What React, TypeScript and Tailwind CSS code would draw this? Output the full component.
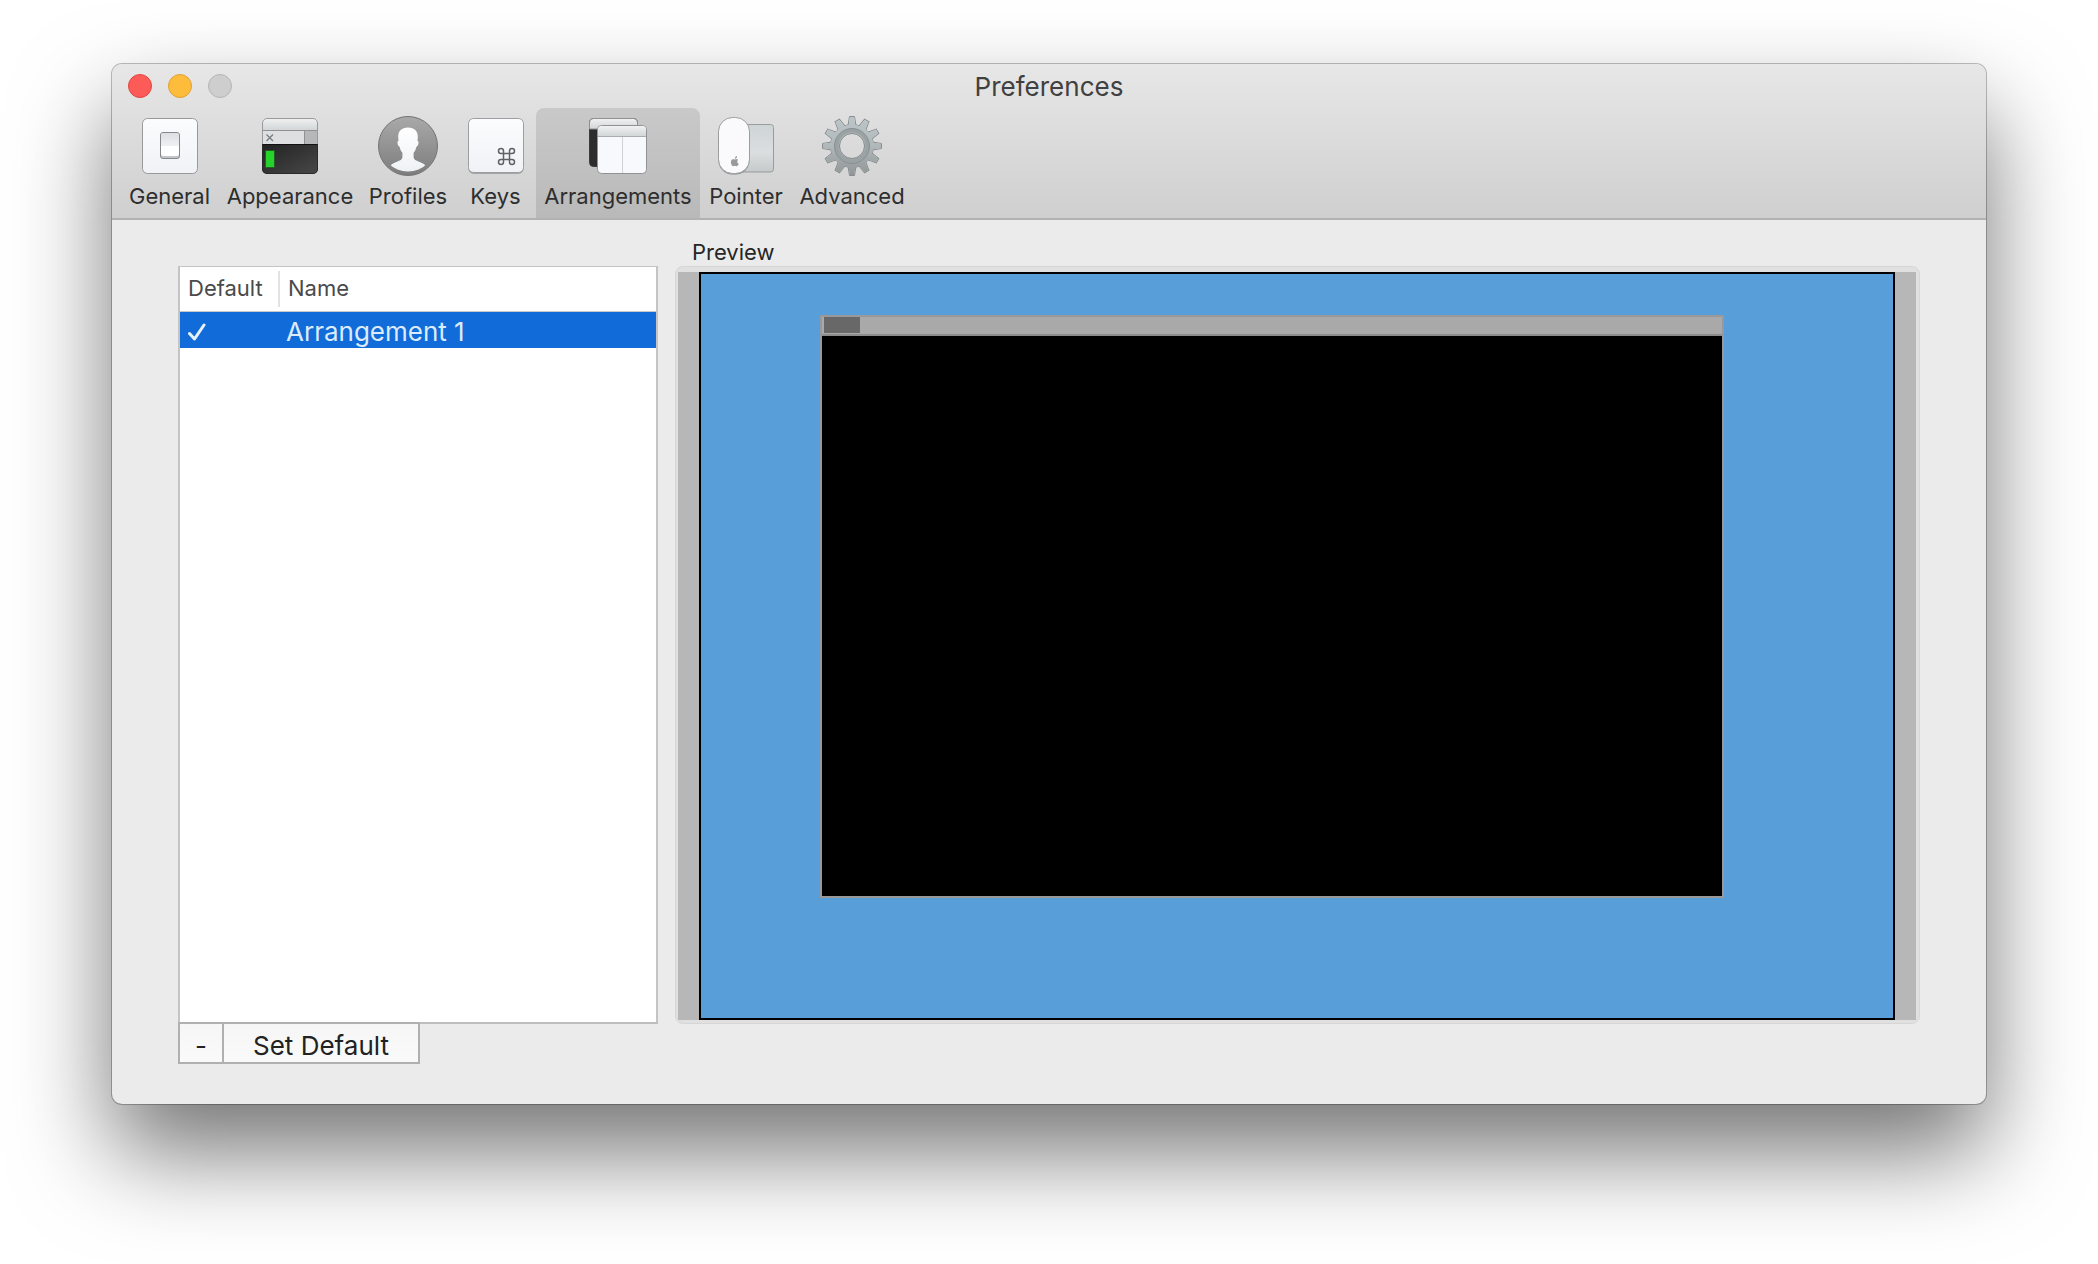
import { useState } from 'react';
import type { ReactNode } from 'react';

type Tab = {
  id: string;
  width: string;
  icon: ReactNode;
};

const TEETH = Array.from({ length: 12 }, (_, i) => i * 30);

function GeneralIcon() {
  return (
    <svg viewBox="0 0 60 60" className="size-[60px]" aria-hidden="true">
      <defs>
        <linearGradient id="plate" x1="0" y1="0" x2="0" y2="1">
          <stop offset="0" stopColor="#fbfcfd" />
          <stop offset="1" stopColor="#f0f2f6" />
        </linearGradient>
        <linearGradient id="toggle" x1="0" y1="0" x2="0" y2="1">
          <stop offset="0" stopColor="#dcdfe1" />
          <stop offset="1" stopColor="#eef0f1" />
        </linearGradient>
      </defs>
      <rect x="2.5" y="2.5" width="55" height="55" rx="5" fill="url(#plate)" stroke="#97999b" />
      <rect x="20.5" y="16.5" width="19" height="26" rx="2.5" fill="#c3c5c8" stroke="#85878a" />
      <path d="M21 30h18v8a2 2 0 0 1-2 2H23a2 2 0 0 1-2-2z" fill="#fff" />
      <path d="M21 30V19a2 2 0 0 1 2-2h14a2 2 0 0 1 2 2v11z" fill="url(#toggle)" />
    </svg>
  );
}

function AppearanceIcon() {
  return (
    <svg viewBox="0 0 60 60" className="size-[60px]" aria-hidden="true">
      <defs>
        <linearGradient id="bar" x1="0" y1="0" x2="0" y2="1">
          <stop offset="0" stopColor="#f1f2f2" />
          <stop offset="1" stopColor="#d2d6d7" />
        </linearGradient>
        <linearGradient id="screen" x1="0" y1="0" x2="1" y2="1">
          <stop offset="0" stopColor="#222" />
          <stop offset="1" stopColor="#484848" />
        </linearGradient>
        <clipPath id="appearanceClip">
          <rect x="2" y="2" width="56" height="56" rx="5" />
        </clipPath>
      </defs>
      <g clipPath="url(#appearanceClip)">
        <rect x="2" y="2" width="56" height="12" fill="url(#bar)" />
        <rect x="2" y="14" width="56" height="14" fill="#dddfe1" />
        <rect x="44" y="14" width="14" height="14" fill="#b5b7b9" />
        <path d="M2 14.500h56M44.500 14v14" stroke="#8f9193" />
        <rect x="2" y="28" width="56" height="30" fill="url(#screen)" />
        <path d="M2 28.500h56" stroke="#111" />
      </g>
      <path d="M6.500 18.500l6.500 6.500M13 18.500L6.500 25" stroke="#77797b" strokeWidth="1.200" />
      <rect x="5" y="34" width="10" height="18" fill="#1f7a22" opacity="0.6" />
      <rect x="6" y="35" width="8" height="16" fill="#26d32b" />
      <path d="M2.500 28V7a4.500 4.500 0 0 1 4.500-4.500h46A4.500 4.500 0 0 1 57.500 7v21" fill="none" stroke="#97999b" />
      <path d="M2.500 28v25a4.500 4.500 0 0 0 4.500 4.500h46a4.500 4.500 0 0 0 4.500-4.500V28" fill="none" stroke="#2a2a2a" />
    </svg>
  );
}

function ProfilesIcon() {
  return (
    <svg viewBox="0 0 60 60" className="size-[60px]" aria-hidden="true">
      <defs>
        <linearGradient id="disc" x1="0" y1="0" x2="0" y2="1">
          <stop offset="0" stopColor="#a9a9a9" />
          <stop offset="1" stopColor="#7d7d7d" />
        </linearGradient>
        <linearGradient id="person" x1="0" y1="0" x2="0" y2="1">
          <stop offset="0" stopColor="#fff" />
          <stop offset="1" stopColor="#eef1f4" />
        </linearGradient>
        <clipPath id="discClip">
          <circle cx="30" cy="28" r="27.500" />
        </clipPath>
      </defs>
      <circle cx="30" cy="30" r="29.500" fill="url(#disc)" stroke="#747474" />
      <path
        clipPath="url(#discClip)"
        fill="url(#person)"
        d="M30 11.500c6.500 0 10 4 9.800 9.500l-.3 4c1 0 1.200 1.200.9 2.500-.3 1.700-.9 3-2 3.200-.5 2.500-1.500 4.500-2.800 6v4.800c.2 2 2.400 3 5.400 4.200 3.500 1.400 6 2.400 6.500 4.300V58h-35v-8c.5-1.900 3-2.900 6.500-4.300 3-1.200 5.200-2.200 5.400-4.200v-4.800c-1.300-1.500-2.300-3.500-2.800-6-1.100-.2-1.700-1.500-2-3.200-.3-1.300-.1-2.500.9-2.500l-.3-4c-.2-5.500 3.300-9.500 9.800-9.500z"
      />
    </svg>
  );
}

function KeysIcon() {
  return (
    <svg viewBox="0 0 60 60" className="size-[60px]" aria-hidden="true">
      <rect x="2.5" y="3.5" width="55" height="54.500" rx="5" fill="#a3a5a9" />
      <rect x="2.5" y="2.5" width="55" height="54" rx="5" fill="url(#plate)" stroke="#9c9ea1" />
      <path
        d="M37.500 37.500h6v6h-6zM37.500 37.500h-2.500a2.500 2.500 0 1 1 2.500-2.500zM43.500 37.500h2.500a2.500 2.500 0 1 0-2.500-2.500zM37.500 43.500h-2.500a2.500 2.500 0 1 0 2.500 2.500zM43.500 43.500h2.500a2.500 2.500 0 1 1-2.500 2.500z"
        fill="none"
        stroke="#606266"
        strokeWidth="1.500"
      />
    </svg>
  );
}

function ArrangementsIcon() {
  return (
    <svg viewBox="0 0 60 60" className="size-[60px]" aria-hidden="true">
      <rect x="1.5" y="2.5" width="48" height="48" rx="4" fill="#2d2d2d" stroke="#3c3c3c" />
      <path d="M1.500 13V6.500a4 4 0 0 1 4-4h40a4 4 0 0 1 4 4V13z" fill="url(#bar)" stroke="#8f9193" />
      <rect x="9.5" y="9.500" width="49" height="48" rx="4" fill="#f8f9fc" stroke="#8f9193" />
      <path d="M10 20v-6.500a3.500 3.500 0 0 1 3.500-3.500h41a3.500 3.500 0 0 1 3.500 3.500V20z" fill="url(#bar)" />
      <path d="M10 20.500h48" stroke="#a9abac" />
      <path d="M34.500 21v36" stroke="#cfd1d5" />
    </svg>
  );
}

function PointerIcon() {
  return (
    <svg viewBox="0 0 60 60" className="size-[60px]" aria-hidden="true">
      <defs>
        <linearGradient id="pad" x1="0" y1="0" x2="0" y2="1">
          <stop offset="0" stopColor="#cfd4d6" />
          <stop offset="0.6" stopColor="#dadedf" />
          <stop offset="1" stopColor="#c5c9ca" />
        </linearGradient>
      </defs>
      <rect x="14.500" y="8.500" width="43" height="47.500" rx="3" fill="url(#pad)" stroke="#999b9c" />
      <rect x="2.500" y="2.500" width="31" height="56" rx="14" fill="#858789" />
      <rect x="2.500" y="1.500" width="31" height="56" rx="14" fill="#fafafc" stroke="#9b9d9f" />
      <path
        fill="#97999b"
        d="M19 43.600c1-.6 2-.8 3.100.2-1.300 1.300-1.100 3.100.6 4-.5 1.500-1.400 2.500-2.300 2.400-.6-.1-.9-.4-1.500-.4s-.9.300-1.500.4c-1.400.1-3-3.200-2.400-5 .5-1.700 2-2.300 4-1.600zM18.900 42.800c0-1.600.9-2.600 2.200-2.800.1 1.600-.8 2.700-2.200 2.800z"
      />
    </svg>
  );
}

function AdvancedIcon() {
  return (
    <svg viewBox="0 0 60 60" className="size-[60px]" aria-hidden="true">
      <defs>
        <linearGradient id="metal" gradientUnits="userSpaceOnUse" x1="0" y1="0" x2="0" y2="60">
          <stop offset="0" stopColor="#bcc6c9" />
          <stop offset="0.5" stopColor="#b0b8ba" />
          <stop offset="1" stopColor="#909495" />
        </linearGradient>
        <mask id="gearMask">
          <g fill="#fff">
            <circle cx="30" cy="30" r="21.500" />
            {TEETH.map((a) => (
              <path key={a} d="M26.500 10L27.800 1h4.400L33.500 10z" transform={`rotate(${a} 30 30)`} />
            ))}
          </g>
          <circle cx="30" cy="30" r="12.500" fill="#000" />
        </mask>
      </defs>
      <g fill="none" stroke="#878d8f">
        {TEETH.map((a) => (
          <path key={a} d="M26 9.500L27.500 .5h5L34 9.500" transform={`rotate(${a} 30 30)`} />
        ))}
        <circle cx="30" cy="30" r="21.500" />
      </g>
      <rect width="60" height="60" fill="url(#metal)" mask="url(#gearMask)" />
      <circle cx="30" cy="30" r="15.500" fill="none" stroke="#9aa2a4" strokeWidth="4" />
      <circle cx="30" cy="30" r="17.500" fill="none" stroke="#899092" />
      <circle cx="30" cy="30" r="12.500" fill="none" stroke="#858b8d" />
    </svg>
  );
}

const TABS: Tab[] = [
  { id: 'General', width: 'w-[99px]', icon: <GeneralIcon /> },
  { id: 'Appearance', width: 'w-[142px]', icon: <AppearanceIcon /> },
  { id: 'Profiles', width: 'w-[94px]', icon: <ProfilesIcon /> },
  { id: 'Keys', width: 'w-[81px]', icon: <KeysIcon /> },
  { id: 'Arrangements', width: 'w-[164px]', icon: <ArrangementsIcon /> },
  { id: 'Pointer', width: 'w-[92px]', icon: <PointerIcon /> },
  { id: 'Advanced', width: 'w-[120px]', icon: <AdvancedIcon /> },
];

function Toolbar() {
  const [active, setActive] = useState('Arrangements');

  return (
    <nav className="flex px-2" aria-label="Preference panes">
      {TABS.map((tab) => (
        <button
          key={tab.id}
          type="button"
          onClick={() => setActive(tab.id)}
          aria-pressed={active === tab.id}
          className={`flex h-[110px] flex-col items-center gap-1.5 rounded-t-lg pt-2 text-[22px] leading-7 whitespace-nowrap text-[#2e2e2e] ${tab.width} ${
            active === tab.id ? 'bg-linear-to-b from-[#c9c9c9] to-[#b9b9b9]' : ''
          }`}
        >
          {tab.icon}
          <span>{tab.id}</span>
        </button>
      ))}
    </nav>
  );
}

function ArrangementList() {
  return (
    <div className="flex flex-col pt-[46px] pb-10">
      <div className="flex-1 border-x-2 border-t border-[#c4c4c4] bg-white">
        <table className="w-full table-fixed text-left">
          <thead>
            <tr className="h-11 border-b border-[#c8c8c8] text-[22px] text-[#4a4a4a]">
              <th className="w-[100px] p-0 font-normal">
                <div className="flex h-9 items-center border-r-2 border-[#e2e2e2] pl-2">Default</div>
              </th>
              <th className="p-0 pl-2 font-normal">Name</th>
            </tr>
          </thead>
          <tbody>
            <tr className="h-9 bg-[#116bd8] text-[26px] leading-8 text-[#dcebfc]">
              <td className="p-0 pl-2">
                <svg viewBox="0 0 18 18" className="mt-1 size-[18px]" role="img" aria-label="Default">
                  <path d="M1.500 10.500L6.500 16L16 2" fill="none" stroke="#e8f2fd" strokeWidth="3" strokeLinecap="round" strokeLinejoin="round" />
                </svg>
              </td>
              <td className="p-0 pt-1 pl-1.5">Arrangement 1</td>
            </tr>
          </tbody>
        </table>
      </div>
      <div className="border-t-2 border-[#bebebe]">
        <div className="-mt-0.5 flex h-[42px] w-[242px] border-2 border-[#b0b0b0] bg-linear-to-b from-[#f6f6f6] to-[#fafafa] text-[26px] text-[#222]">
          <button type="button" className="w-11 border-r-2 border-[#b0b0b0] pt-0.5" aria-label="Remove arrangement">
            -
          </button>
          <button type="button" className="flex-1 pt-0.5">
            Set Default
          </button>
        </div>
      </div>
    </div>
  );
}

function Preview() {
  return (
    <section className="flex flex-col pb-20" aria-labelledby="preview-title">
      <h2 id="preview-title" className="h-[46px] pt-[18px] pl-[17px] text-[22px] leading-7 text-[#262626]">
        Preview
      </h2>
      <div className="flex flex-1 rounded-lg border border-[#d6d6d6] bg-[#e0e0e0] pt-[5px] pr-[3px] pb-[3px] pl-0.5">
        <div className="flex flex-1 bg-[#b7b7b7] px-[21px]">
          <div className="relative flex-1 border-2 border-black bg-[#589ed9]">
            <div className="absolute top-[5.5%] left-[10%] flex h-[78.4%] w-[75.8%] flex-col border-2 border-[#999] bg-black">
              <div className="h-[19px] border-b-2 border-[#8c8c8c] bg-[#a9a9a9] pl-0.5">
                <div className="h-4 w-9 bg-[#686868]" />
              </div>
            </div>
          </div>
        </div>
      </div>
    </section>
  );
}

export default function App() {
  return (
    <div className="flex min-h-screen bg-white px-28 pt-16 pb-40 font-['Inter','Liberation_Sans',sans-serif]">
      <main className="flex flex-1 flex-col overflow-hidden rounded-[10px] bg-[#ebebeb] shadow-[0_0_0_1px_rgba(0,0,0,0.25),0_48px_96px_rgba(0,0,0,0.55)]">
        <header className="border-b-2 border-[#b2b2b2] bg-linear-to-b from-[#e7e7e7] to-[#cfcfcf]">
          <div className="grid h-11 grid-cols-[1fr_auto_1fr] items-center px-4">
            <div className="flex gap-4">
              <button type="button" aria-label="Close" className="size-6 rounded-full border border-[#e2453f] bg-[#fc5b57]" />
              <button type="button" aria-label="Minimize" className="size-6 rounded-full border border-[#e1a032] bg-[#fdbc3c]" />
              <button type="button" aria-label="Zoom" disabled className="size-6 rounded-full border border-[#b4b4b4] bg-[#cecece]" />
            </div>
            <h1 className="pt-0.5 text-[26px] leading-8 text-[#404040]">Preferences</h1>
          </div>
          <Toolbar />
        </header>
        <div className="grid flex-1 grid-cols-[480px_1fr] gap-[17px] px-[66px]">
          <ArrangementList />
          <Preview />
        </div>
      </main>
    </div>
  );
}
